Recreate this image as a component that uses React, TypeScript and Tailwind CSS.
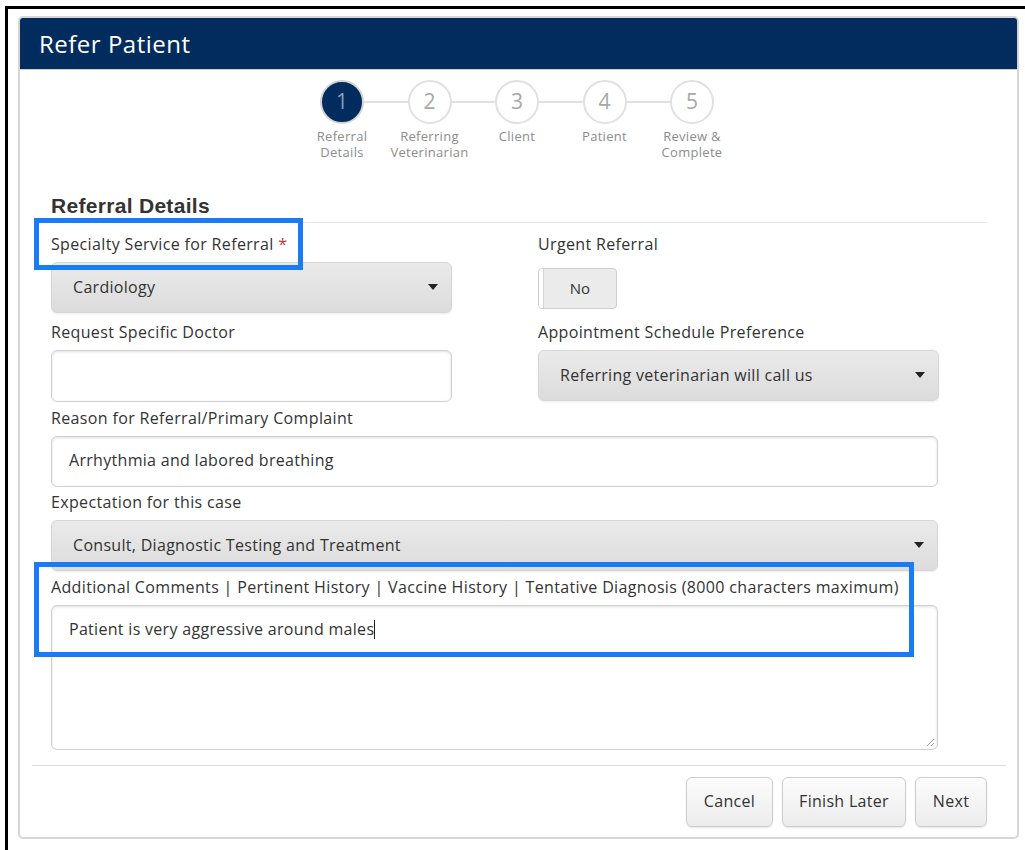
import type { ReactNode } from "react"

type Step = { n: number; label: string[] }

const steps: Step[] = [
  { n: 1, label: ["Referral", "Details"] },
  { n: 2, label: ["Referring", "Veterinarian"] },
  { n: 3, label: ["Client"] },
  { n: 4, label: ["Patient"] },
  { n: 5, label: ["Review &", "Complete"] },
]

function Caret() {
  return (
    <svg width="10" height="6" viewBox="0 0 10 6" className="shrink-0">
      <polygon points="0,0 10,0 5,6" fill="#222" />
    </svg>
  )
}

function Stepper() {
  return (
    <div className="mt-[10px] flex justify-center pr-[4px]">
      {steps.map((s, i) => {
        const active = i === 0
        return (
          <div key={s.n} className="flex w-[87.5px] flex-col items-center">
            <div className="flex w-full items-center">
              <div className={`h-[2px] flex-1 ${i === 0 ? "" : "bg-[#e0e0e0]"}`} />
              <div
                className={
                  active
                    ? "flex h-[44px] w-[44px] items-center justify-center rounded-full border-2 border-[#d4d4d4] bg-[#022b5e] text-[21px] text-[#8e9cb2]"
                    : "flex h-[44px] w-[44px] items-center justify-center rounded-full border-2 border-[#e0e0e0] bg-white text-[21px] text-[#a8a8a8]"
                }
              >
                {s.n}
              </div>
              <div className={`h-[2px] flex-1 ${i === steps.length - 1 ? "" : "bg-[#e0e0e0]"}`} />
            </div>
            <div className="mt-[4px] whitespace-nowrap text-center text-[13px] leading-[16px] tracking-[0.3px] text-[#8c8c8c]">
              {s.label.map((l) => (
                <div key={l}>{l}</div>
              ))}
            </div>
          </div>
        )
      })}
    </div>
  )
}

function Label({ children }: { children: ReactNode }) {
  return (
    <div className="mb-[8px] h-[20px] whitespace-nowrap text-[16px] leading-[20px] tracking-[0.35px] text-[#333]">
      {children}
    </div>
  )
}

function Select({ value, className = "" }: { value: string; className?: string }) {
  return (
    <div
      className={`flex h-[51px] items-center justify-between rounded-[6px] border border-[#d6d6d6] bg-linear-to-b from-[#eaeaea] to-[#dcdcdc] pb-[1px] pl-[21px] pr-[13px] text-[16px] tracking-[0.3px] text-[#333] shadow-[0_1px_2px_rgba(0,0,0,0.08)] ${className}`}
    >
      <span>{value}</span>
      <Caret />
    </div>
  )
}

function TextInput({ value = "", className = "" }: { value?: string; className?: string }) {
  return (
    <div
      className={`flex h-[51px] items-center rounded-[6px] border border-[#cfcfcf] bg-white pb-[3px] pl-[17px] text-[16px] tracking-[0.3px] text-[#333] shadow-[inset_0_1px_3px_rgba(0,0,0,0.12)] ${className}`}
    >
      {value}
    </div>
  )
}

function Button({ children, w }: { children: ReactNode; w: string }) {
  return (
    <button
      className={`h-[50px] ${w} rounded-[6px] border border-[#cdcdcd] bg-linear-to-b from-[#fcfcfc] to-[#ececec] pb-[2px] text-[16px] tracking-[0.3px] text-[#333] shadow-[0_1px_2px_rgba(0,0,0,0.1)]`}
    >
      {children}
    </button>
  )
}

export default function App() {
  return (
    <div className="relative h-[850px] w-[1025px] overflow-hidden bg-white font-['Open_Sans',sans-serif]">
      {/* black frame around the dialog */}
      <div className="ml-[5px] mt-[6px] h-[844px] border-l-[3px] border-t-[3px] border-black pl-[10px] pr-[6px] pt-[7px]">
        <div className="overflow-hidden rounded-[5px] border-2 border-[#d6d6d6] bg-white">
          <div className="flex h-[52px] items-center border-b border-[#d0d0d0] bg-[#022b5e] pl-[19px] text-[24px] tracking-[0.5px] text-white">
            Refer Patient
          </div>

          <div className="pl-[12px] pr-[11px]">
            <div className="px-[19px]">
              <Stepper />

              <div className="mt-[34px] border-b border-[#e8e8e8] pb-[4px] font-['Liberation_Sans',sans-serif] text-[21px] font-bold leading-[24px] tracking-[0.3px] text-[#333]">
                Referral Details
              </div>

              <div className="mt-[11px] w-[888px]">
                <div className="grid grid-cols-[401px_401px] gap-x-[86px]">
                  <div>
                    <Label>
                      Specialty Service for Referral <span className="text-[#c0392b]">*</span>
                    </Label>
                    <Select value="Cardiology" className="h-[50px]" />
                  </div>
                  <div className="flex flex-col">
                    <Label>Urgent Referral</Label>
                    <div className="mt-[6px] flex h-[41px] w-[79px] overflow-hidden rounded-[4px] border border-[#cfcfcf] bg-[#ebebeb]">
                      <div className="w-[5px] border-r border-[#d6d6d6] bg-white" />
                      <div className="flex flex-1 items-center justify-center text-[15px] text-[#333]">No</div>
                    </div>
                  </div>
                </div>

                <div className="mt-[9px] grid grid-cols-[401px_401px] gap-x-[86px]">
                  <div>
                    <Label>Request Specific Doctor</Label>
                    <TextInput className="h-[52px]" />
                  </div>
                  <div>
                    <Label>Appointment Schedule Preference</Label>
                    <Select value="Referring veterinarian will call us" />
                  </div>
                </div>

                <div className="mt-[6px] w-[887px]">
                  <Label>Reason for Referral/Primary Complaint</Label>
                  <TextInput value="Arrhythmia and labored breathing" />
                </div>

                <div className="mt-[5px] w-[887px]">
                  <Label>Expectation for this case</Label>
                  <Select value="Consult, Diagnostic Testing and Treatment" className="pr-[12px]" />
                </div>

                <div className="mt-[6px] w-[887px]">
                  <Label>
                    Additional Comments | Pertinent History | Vaccine History | Tentative Diagnosis (8000 characters maximum)
                  </Label>
                  <div className="relative h-[145px] rounded-[6px] border border-[#cfcfcf] bg-white pl-[17px] pt-[13px] text-[16px] leading-[20px] tracking-[0.3px] text-[#333] shadow-[inset_0_1px_3px_rgba(0,0,0,0.12)]">
                    Patient is very aggressive around males
                    <span className="inline-block h-[19px] w-px bg-[#222] align-[-4px]" />
                    {/* resize grip */}
                    <svg width="9" height="9" viewBox="0 0 9 9" className="absolute bottom-[2px] right-[2px]">
                      <line x1="1" y1="8" x2="8" y2="1" stroke="#9a9a9a" strokeWidth="1" />
                      <line x1="5" y1="8" x2="8" y2="5" stroke="#9a9a9a" strokeWidth="1" />
                    </svg>
                  </div>
                </div>
              </div>
            </div>

            <div className="mt-[15px] h-px bg-[#dcdcdc]" />

            <div className="flex justify-end gap-[9px] px-[19px] pb-[10px] pt-[11px]">
              <Button w="w-[87px]">Cancel</Button>
              <Button w="w-[124px]">Finish Later</Button>
              <Button w="w-[72px]">Next</Button>
            </div>
          </div>
        </div>
      </div>

      {/* highlight boxes */}
      <div className="pointer-events-none absolute left-[34px] top-[218px] h-[52px] w-[269px] border-[5px] border-[#1a7cf2]" />
      <div className="pointer-events-none absolute left-[34px] top-[562px] h-[95px] w-[880px] border-[5px] border-[#1a7cf2]" />
    </div>
  )
}
